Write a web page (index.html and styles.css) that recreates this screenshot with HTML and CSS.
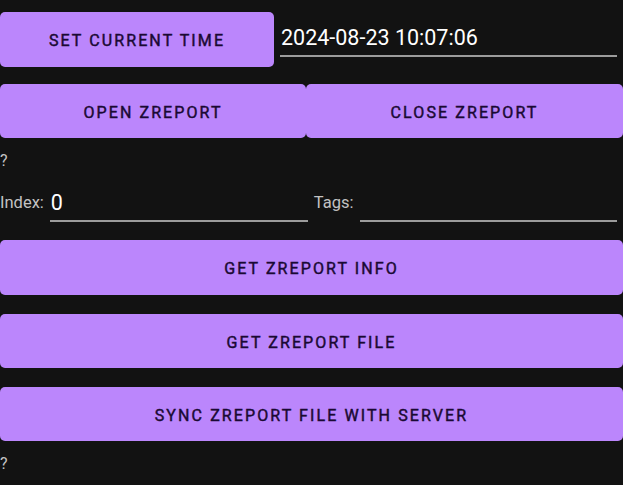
FILE: index.html
```html
<!DOCTYPE html>
<html>
<head>
<meta charset="utf-8">
<link rel="stylesheet" href="styles.css">
</head>
<body>
<div class="screen">
  <div class="row row-time">
    <button class="btn btn-time">SET CURRENT TIME</button>
    <div class="field field-time"><span class="value-big">2024-08-23 10:07:06</span></div>
  </div>
  <div class="row row-report">
    <button class="btn btn-open">OPEN ZREPORT</button>
    <button class="btn btn-close">CLOSE ZREPORT</button>
  </div>
  <div class="status status-top">?</div>
  <div class="row row-index">
    <span class="label">Index:</span>
    <div class="field field-index"><span class="value-big">0</span></div>
    <span class="label label-tags">Tags:</span>
    <div class="field field-tags"></div>
  </div>
  <button class="btn btn-full btn-info">GET ZREPORT INFO</button>
  <button class="btn btn-full btn-file">GET ZREPORT FILE</button>
  <button class="btn btn-full btn-sync">SYNC ZREPORT FILE WITH SERVER</button>
  <div class="status status-bottom">?</div>
</div>
</body>
</html>
```
FILE: styles.css
```css
html, body {
  margin: 0;
  padding: 0;
  background: #121212;
  width: 623px;
  height: 485px;
  overflow: hidden;
}
.screen {
  display: flex;
  flex-direction: column;
  font-family: Roboto, "Liberation Sans", sans-serif;
}
.row {
  display: flex;
  align-items: stretch;
}
.btn {
  border: none;
  margin: 0;
  padding: 0;
  background: #bb86fc;
  color: #1a0933;
  font-family: Roboto, "Liberation Sans", sans-serif;
  font-weight: 400;
  font-size: 16px;
  letter-spacing: 2.1px;
  border-radius: 5px;
  height: 55px;
  display: flex;
  align-items: center;
  justify-content: center;
  padding-top: 2px;
  -webkit-text-stroke: 0.45px #1a0933;
}
.row-time {
  margin-top: 12px;
  height: 55px;
}
.btn-time {
  flex: 0 0 274px;
}
.field {
  border-bottom: 2px solid #9c9c9c;
  display: flex;
  align-items: flex-end;
}
.field-time {
  flex: 1;
  margin: 0 6px 10px 6px;
}
.value-big {
  color: #ffffff;
  font-size: 21.5px;
  line-height: 28px;
  padding-left: 1px;
  padding-bottom: 3px;
}
.row-report {
  margin-top: 17px;
  height: 54px;
}
.row-report .btn {
  height: 54px;
}
.btn-open {
  flex: 0 0 306px;
}
.btn-close {
  flex: 1;
}
.status {
  color: #c4c4c4;
  font-size: 16px;
  line-height: 20px;
}
.status-top {
  margin-top: 13px;
}
.row-index {
  margin-top: 13px;
  height: 38px;
  align-items: flex-end;
}
.label {
  color: #c2c2c2;
  font-size: 16.5px;
  line-height: 20px;
  padding-bottom: 9px;
}
.field-index {
  width: 258px;
  margin-left: 6px;
  height: 36px;
}
.label-tags {
  margin-left: 6px;
}
.field-tags {
  flex: 1;
  margin-left: 6px;
  margin-right: 6px;
  height: 36px;
}
.btn-full {
  width: 623px;
}
.btn-info {
  margin-top: 18px;
}
.btn-file {
  margin-top: 19px;
  height: 54px;
}
.btn-sync {
  margin-top: 19px;
  height: 54px;
}
.status-bottom {
  margin-top: 13px;
}
```
